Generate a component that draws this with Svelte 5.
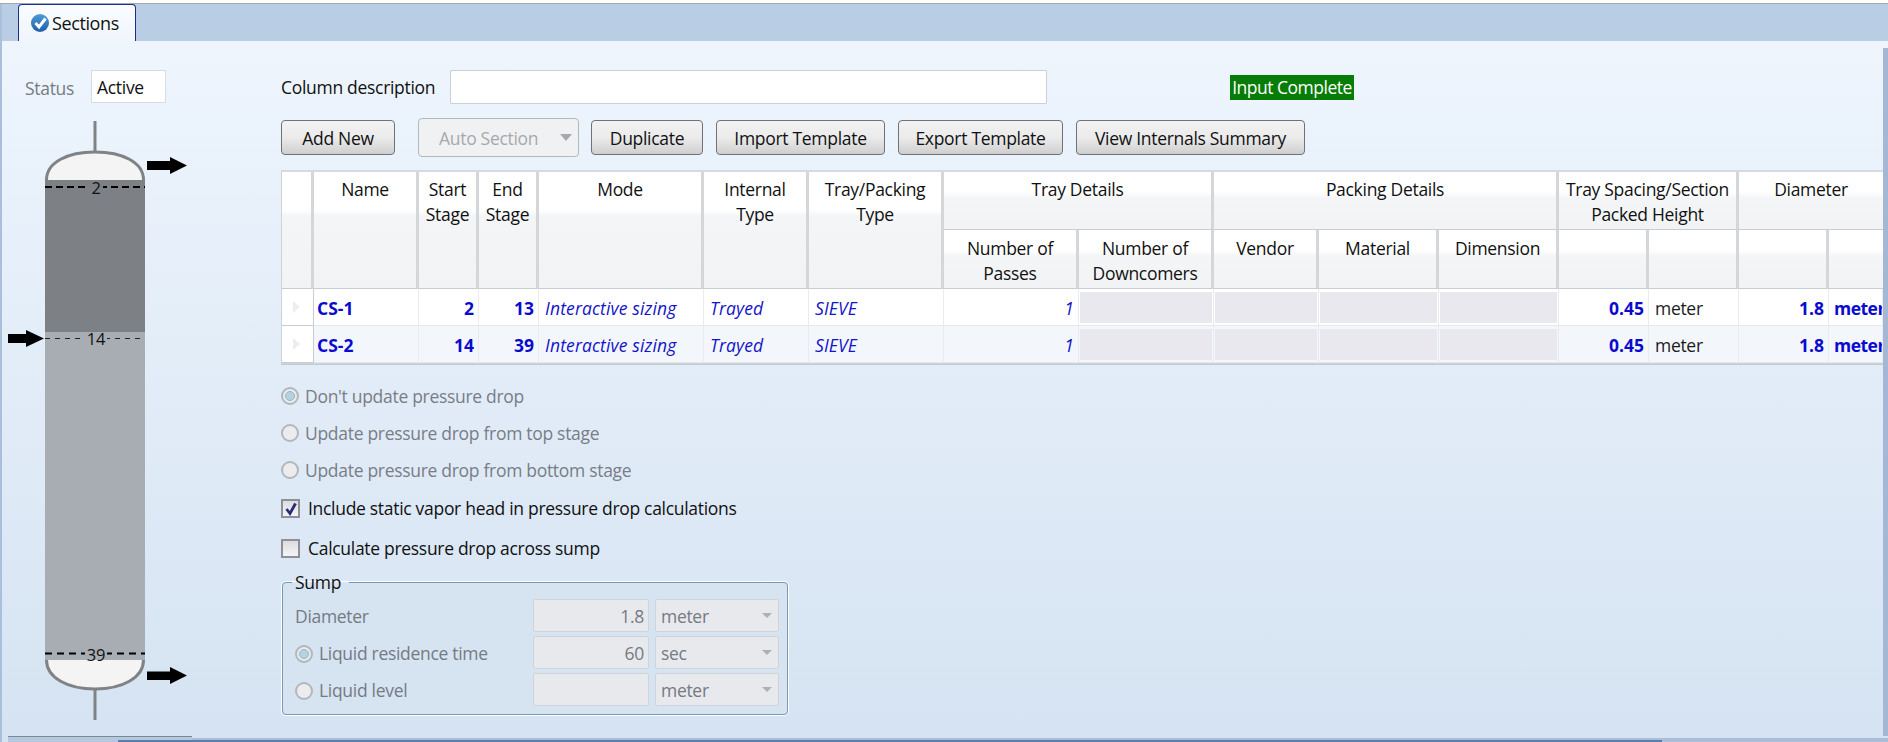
<script>
  const rows = [
    { name: 'CS-1', start: 2, end: 13, tall: false },
    { name: 'CS-2', start: 14, end: 39, tall: true }
  ];
  const buttons = [
    ['Duplicate', 'b-dup'],
    ['Import Template', 'b-imp'],
    ['Export Template', 'b-exp'],
    ['View Internals Summary', 'b-view']
  ];
  const options = [
    ["Don't update pressure drop", true],
    ['Update pressure drop from top stage', false],
    ['Update pressure drop from bottom stage', false]
  ];
</script>

<div class="page">
  <div class="topline"></div>
  <div class="tabstrip">
    <div class="tab">
      <svg class="tabicon" viewBox="0 0 18 18" width="18" height="18">
        <defs>
          <linearGradient id="tabball" x1="0" y1="0" x2="0" y2="1">
            <stop offset="0" stop-color="#4f9ad8" />
            <stop offset="1" stop-color="#1f5fa8" />
          </linearGradient>
        </defs>
        <circle cx="9" cy="9" r="9" fill="url(#tabball)" />
        <path d="M4.500 9 L8 13 L14.500 4.500" fill="none" stroke="#fff" stroke-width="3" />
      </svg>
      <span>Sections</span>
    </div>
  </div>

  <div class="panel">
    <aside class="left">
      <div class="status">
        <span class="muted">Status</span>
        <span class="statusbox">Active</span>
      </div>
      <svg class="column" width="150" height="600" viewBox="0 0 150 600">
        <rect x="93.500" y="1" width="3" height="32" fill="#808386" />
        <rect x="93.500" y="569" width="3" height="31" fill="#808386" />
        <path d="M46.500 60 C46.500 42 68 32 95 32 C122 32 143.500 42 143.500 60 L143.500 62 L46.500 62 Z" fill="#f4f4f5" stroke="#808386" stroke-width="3" />
        <path d="M46.500 540 C46.500 558 68 569 95 569 C122 569 143.500 558 143.500 540 L143.500 530 L46.500 530 Z" fill="#f4f4f5" stroke="#808386" stroke-width="3" />
        <rect x="45" y="60" width="100" height="152" fill="#7d8186" />
        <rect x="45" y="212" width="100" height="328" fill="#a8adb4" />
        <line x1="45" x2="145" y1="67" y2="67" stroke="#000" stroke-width="2" stroke-dasharray="7 4" />
        <line x1="45" x2="145" y1="218.500" y2="218.500" stroke="#222" stroke-width="1" stroke-dasharray="5 5" />
        <line x1="45" x2="145" y1="533.500" y2="533.500" stroke="#000" stroke-width="2" stroke-dasharray="7 5" />
        <rect x="89" y="60" width="14" height="14" fill="#7d8186" />
        <rect x="85" y="212" width="22" height="14" fill="#a8adb4" />
        <rect x="85" y="526" width="22" height="14" fill="#a8adb4" />
        <text x="96" y="74" class="stage">2</text>
        <text x="96" y="224.500" class="stage">14</text>
        <text x="96" y="540.500" class="stage">39</text>
        <path d="M147 41 H170 V37 L187 45.500 L170 54 V50 H147 Z" fill="#000" />
        <path d="M8 214 H26 V210 L44 218.500 L26 227 V223 H8 Z" fill="#000" />
        <path d="M147 551.500 H170 V547 L187 555.500 L170 564 V560 H147 Z" fill="#000" />
      </svg>
    </aside>

    <main class="right">
      <div class="descrow">
        <span class="desclabel">Column description</span>
        <span class="descbox"></span>
        <span class="complete">Input Complete</span>
      </div>

      <div class="toolbar">
        <button class="btn b-add">Add New</button>
        <div class="combo-btn">
          <span>Auto Section</span>
          <i class="caret"></i>
        </div>
        {#each buttons as b}
          <button class="btn {b[1]}">{b[0]}</button>
        {/each}
      </div>

      <div class="grid">
        <div class="h r3"></div>
        <div class="h r3">Name</div>
        <div class="h r3">Start<br />Stage</div>
        <div class="h r3">End<br />Stage</div>
        <div class="h r3">Mode</div>
        <div class="h r3">Internal<br />Type</div>
        <div class="h r3">Tray/Packing<br />Type</div>
        <div class="h span2">Tray Details</div>
        <div class="h span3">Packing Details</div>
        <div class="h span2">Tray Spacing/Section<br />Packed Height</div>
        <div class="h span2 nob">Diameter</div>

        <div class="h sub">Number of<br />Passes</div>
        <div class="h sub">Number of<br />Downcomers</div>
        <div class="h sub">Vendor</div>
        <div class="h sub">Material</div>
        <div class="h sub">Dimension</div>
        <div class="h sub"></div>
        <div class="h sub"></div>
        <div class="h sub"></div>
        <div class="h sub nob"></div>

        {#each rows as r}
          <div class="c sel" class:tall={r.tall}><i class="tri"></i></div>
          <div class="c strong first-col" class:tall={r.tall}>{r.name}</div>
          <div class="c strong num" class:tall={r.tall}>{r.start}</div>
          <div class="c strong num" class:tall={r.tall}>{r.end}</div>
          <div class="c ital" class:tall={r.tall}>Interactive sizing</div>
          <div class="c ital" class:tall={r.tall}>Trayed</div>
          <div class="c ital" class:tall={r.tall}>SIEVE</div>
          <div class="c ital num" class:tall={r.tall}>1</div>
          <div class="c off" class:tall={r.tall}><b></b></div>
          <div class="c off" class:tall={r.tall}><b></b></div>
          <div class="c off" class:tall={r.tall}><b></b></div>
          <div class="c off" class:tall={r.tall}><b></b></div>
          <div class="c strong num" class:tall={r.tall}>0.45</div>
          <div class="c plain" class:tall={r.tall}>meter</div>
          <div class="c strong num" class:tall={r.tall}>1.8</div>
          <div class="c strong clip" class:tall={r.tall}>meter</div>
        {/each}
      </div>

      <div class="options">
        {#each options as o}
          <div class="opt">
            <i class="radio" class:on={o[1]}></i>
            <span>{o[0]}</span>
          </div>
        {/each}
      </div>

      <div class="check first">
        <i class="box">
          <svg viewBox="0 0 15 15" width="15" height="15">
            <path d="M3.500 8 L7 12.500 L12.500 2.500" fill="none" stroke="#2b2a78" stroke-width="2.800" />
          </svg>
        </i>
        <span>Include static vapor head in pressure drop calculations</span>
      </div>
      <div class="check second">
        <i class="box"></i>
        <span>Calculate pressure drop across sump</span>
      </div>

      <fieldset class="sump">
        <legend>Sump</legend>
        <div class="srow">
          <span class="slabel">Diameter</span>
          <span class="sinput">1.8</span>
          <span class="scombo">meter<i class="caret small"></i></span>
        </div>
        <div class="srow">
          <span class="slabel"><i class="radio on"></i>Liquid residence time</span>
          <span class="sinput">60</span>
          <span class="scombo">sec<i class="caret small"></i></span>
        </div>
        <div class="srow">
          <span class="slabel"><i class="radio"></i>Liquid level</span>
          <span class="sinput"></span>
          <span class="scombo">meter<i class="caret small"></i></span>
        </div>
      </fieldset>
    </main>

    <div class="rail"></div>
  </div>

  <div class="bottom">
    <div class="bottomtab"></div>
    <div class="bottomband"></div>
    <div class="bottomstrip"></div>
  </div>
</div>

<style>
  :global(body) {
    margin: 0;
    background: #dbe7f4;
  }
  .page {
    width: 1888px;
    height: 742px;
    overflow: hidden;
    display: flex;
    flex-direction: column;
    font-family: "Open Sans", "Noto Sans", sans-serif;
    font-size: 17.5px;
    color: #111;
    letter-spacing: -0.3px;
    background: #fff;
  }
  .topline {
    height: 4px;
    flex: none;
    box-sizing: border-box;
    background: #fff;
    border-bottom: 1px solid #a4a7ac;
  }
  .tabstrip {
    height: 37px;
    flex: none;
    background: #b9cde5;
    padding-left: 16px;
    border-left: 2px solid #a9bfdc;
    box-sizing: border-box;
  }
  .tab {
    width: 118px;
    height: 37px;
    box-sizing: border-box;
    background: linear-gradient(#fafcff, #f0f6fd);
    border: 1px solid #1a2f8c;
    border-bottom: none;
    border-radius: 4px 4px 0 0;
    display: flex;
    align-items: center;
    padding-left: 12px;
    gap: 3px;
  }
  .tabicon { margin-top: -1px; flex: none; }
  .tab span { font-size: 18px; letter-spacing: -0.4px; }

  .panel {
    flex: 1;
    min-height: 0;
    display: flex;
    background: linear-gradient(#eef5fd, #d5e3f2);
    border-left: 2px solid #a9bfdc;
    box-sizing: border-box;
  }
  .left {
    width: 279px;
    flex: none;
    padding-top: 29px;
    box-sizing: border-box;
  }
  .status {
    display: flex;
    align-items: center;
    padding-left: 23px;
    height: 33px;
  }
  .muted { color: #767b84; width: 66px; margin-top: 2px; }
  .statusbox {
    width: 75px;
    height: 33px;
    box-sizing: border-box;
    background: #fff;
    border: 1px solid #d7dce3;
    padding-left: 5px;
    line-height: 33px;
    color: #111;
  }
  .column {
    display: block;
    margin-top: 17px;
    margin-left: -2px;
    overflow: visible;
  }
  .stage {
    font-size: 16.500px;
    text-anchor: middle;
    fill: #111;
  }

  .right {
    width: 1602px;
    flex: none;
    padding-top: 29px;
  }
  .rail {
    width: 5px;
    flex: none;
    margin-top: 7px;
    background: #a4b7d5;
  }
  .descrow {
    display: flex;
    align-items: center;
    height: 34px;
  }
  .desclabel { width: 169px; flex: none; }
  .descbox {
    width: 597px;
    height: 34px;
    flex: none;
    box-sizing: border-box;
    background: #fff;
    border: 1px solid #c9d0d9;
    border-radius: 1px;
  }
  .complete {
    margin-left: 183px;
    background: #077c07;
    color: #fff;
    height: 25px;
    line-height: 25px;
    width: 124px;
    text-align: center;
    white-space: nowrap;
    letter-spacing: -0.5px;
    flex: none;
  }

  .toolbar {
    display: flex;
    align-items: flex-start;
    margin-top: 14px;
    height: 52px;
  }
  .btn {
    font: inherit;
    letter-spacing: inherit;
    color: #111;
    height: 35px;
    margin-top: 2px;
    padding: 0;
    box-sizing: border-box;
    border: 1px solid #6f7378;
    border-radius: 4px;
    background: linear-gradient(#f2f2f2, #ebebeb 50%, #cfcfcf);
    white-space: nowrap;
  }
  .b-add { width: 114px; margin-right: 23px; }
  .combo-btn {
    width: 161px;
    height: 39px;
    box-sizing: border-box;
    border: 1px solid #b4b8bd;
    border-radius: 4px;
    background: #f0f1f2;
    color: #a6a9ad;
    display: flex;
    align-items: center;
    padding-left: 20px;
    margin-right: 12px;
    position: relative;
  }
  .caret {
    position: absolute;
    right: 6px;
    top: 15px;
    width: 0;
    height: 0;
    border-left: 6px solid transparent;
    border-right: 6px solid transparent;
    border-top: 7px solid #a5a8ac;
  }
  .caret.small {
    right: 6px;
    top: 13px;
    border-left-width: 5px;
    border-right-width: 5px;
    border-top-width: 5px;
    border-top-color: #adb0b6;
  }
  .b-dup { width: 112px; margin-right: 13px; }
  .b-imp { width: 169px; margin-right: 13px; }
  .b-exp { width: 165px; margin-right: 13px; }
  .b-view { width: 229px; }

  .grid {
    display: grid;
    grid-template-columns: 32px 105px 60px 60px 165px 105px 135px 135px 135px 105px 120px 120px 90px 90px 90px 54px;
    grid-template-rows: 58px 59px 37px 37px;
    border: 1px solid #cfd3d8;
    border-right: none;
    border-top: 2px solid #d7dade;
    height: 191px;
    width: 1601px;
    overflow: hidden;
    background: #fff;
    box-shadow: 0 1px 0 #c5cbd2;
  }
  .h {
    background: linear-gradient(#fff 0, #fff 20px, #f4f5f7 26px, #f2f3f5);
    border-right: 3px solid #d4d6d9;
    border-bottom: 1px solid #c9ccd0;
    text-align: center;
    padding-top: 5px;
    box-sizing: border-box;
    line-height: 25px;
    overflow: hidden;
    white-space: nowrap;
  }
  .sub { padding-top: 6px; }
  .r3 {
    grid-row: 1 / span 2;
    background: linear-gradient(#fff 0, #fff 38px, #f4f5f7 44px, #f2f3f5);
  }
  .span2 { grid-column: span 2; }
  .span3 { grid-column: span 3; }
  .nob { border-right: none; }
  .c {
    height: 37px;
    box-sizing: border-box;
    background: #fff;
    border-right: 1px solid #e9ecef;
    border-bottom: 1px solid #e4e7eb;
    line-height: 39px;
    padding: 0 4px 0 4px;
    white-space: nowrap;
    overflow: hidden;
  }
  .c.tall { background: #f3f7fb; }
  .c.sel {
    background: #fff;
    border-right: 1px solid #c9ccd0;
    border-bottom: 1px solid #c9ccd0;
    position: relative;
  }
  .tri {
    position: absolute;
    left: 11px;
    top: 12px;
    border-left: 7px solid #eceef1;
    border-top: 6px solid transparent;
    border-bottom: 6px solid transparent;
  }
  .strong { color: #0b0bd0; font-weight: 700; letter-spacing: 0; }
  .c.first-col { padding-left: 3px; }
  .ital { color: #1414c8; font-style: italic; padding-left: 6px; letter-spacing: 0.15px; }
  .num { text-align: right; }
  .plain { color: #1b1b1b; padding-left: 6px; }
  .c.clip { padding-right: 0; padding-left: 5px; letter-spacing: -0.5px; }
  .c.off { padding: 3px 1px 2px 1px; }
  .off b {
    display: block;
    height: 31px;
    background: #e8e8ee;
  }

  .options {
    margin-top: 13px;
  }
  .opt {
    display: flex;
    align-items: center;
    height: 37px;
    color: #787d86;
  }
  .radio {
    display: inline-block;
    width: 18px;
    height: 18px;
    box-sizing: border-box;
    border-radius: 50%;
    border: 2px solid #b3b6ba;
    background: #ececee;
    margin-right: 6px;
    flex: none;
    position: relative;
    vertical-align: -3px;
  }
  .radio.on { background: #e4ecf2; }
  .radio.on::after {
    content: "";
    position: absolute;
    left: 2px;
    top: 2px;
    width: 10px;
    height: 10px;
    box-sizing: border-box;
    border-radius: 50%;
    border: 1px solid #9fb4c0;
    background: #b4d2df;
  }
  .check {
    display: flex;
    align-items: center;
    height: 24px;
  }
  .check.first { margin-top: 8px; }
  .check.second { margin-top: 16px; }
  .box {
    width: 19px;
    height: 19px;
    box-sizing: border-box;
    border: 2px solid #8d9096;
    background: linear-gradient(#dcdde0, #f5f5f6);
    margin-right: 8px;
    display: block;
    flex: none;
  }
  .box svg { display: block; }

  .sump {
    margin: 12px 0 0 1px;
    width: 506px;
    height: 143px;
    box-sizing: border-box;
    border: 1px solid #7a98b0;
    box-shadow: 0 0 0 1px #fff;
    border-radius: 4px;
    padding: 0 7px 0 12px;
    background: #d6e4f2;
    min-width: 0;
  }
  .sump legend {
    padding: 0 8px 0 3px;
    margin-left: -3px;
    line-height: 20px;
    color: #111;
    height: 20px;
  }
  .srow {
    display: flex;
    align-items: center;
    height: 33px;
    margin-bottom: 4px;
    color: #757a83;
  }
  .srow:first-of-type { margin-top: 7px; }
  .slabel { width: 238px; flex: none; white-space: nowrap; }
  .sinput {
    width: 116px;
    height: 33px;
    box-sizing: border-box;
    background: #e8e9ed;
    border: 1px solid #cfd3da;
    border-radius: 2px;
    text-align: right;
    padding-right: 4px;
    line-height: 32px;
    margin-right: 6px;
    flex: none;
  }
  .scombo {
    width: 124px;
    height: 33px;
    box-sizing: border-box;
    background: #e8e9ed;
    border: 1px solid #cfd3da;
    border-radius: 2px;
    padding-left: 5px;
    line-height: 32px;
    position: relative;
    flex: none;
  }

  .bottom {
    height: 6px;
    flex: none;
    background: #d6e3f1;
    border-left: 2px solid #a9bfdc;
    position: relative;
    display: flex;
    align-items: flex-end;
  }
  .bottomtab {
    margin-left: 6px;
    width: 184px;
    height: 6px;
    flex: none;
    box-sizing: border-box;
    border-top: 1px solid #808890;
    background: #b4c8e0;
  }
  .bottomband {
    flex: 1;
    height: 4px;
    background: #a9bcd9;
  }
  .bottomstrip {
    position: absolute;
    left: 116px;
    width: 1544px;
    bottom: 0;
    height: 2px;
    background: #5a7fae;
  }
</style>
